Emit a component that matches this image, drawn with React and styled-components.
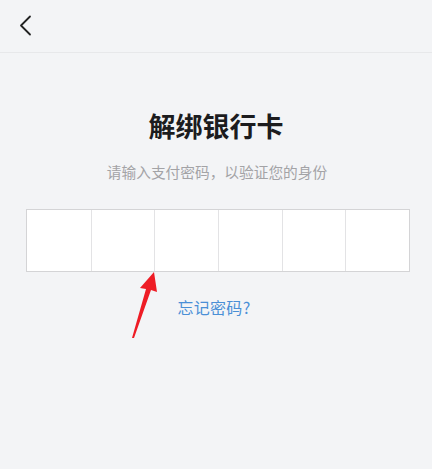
import React from "react";
import styled, { createGlobalStyle } from "styled-components";

const Global = createGlobalStyle`
  html, body { margin: 0; padding: 0; background: #f3f4f6; }
  body { font-family: "Noto Sans CJK SC", "Noto Sans", sans-serif; }
`;

const Page = styled.div`
  position: relative;
  width: 432px;
  height: 469px;
  background: #f3f4f6;
  display: flex;
  flex-direction: column;
  align-items: center;
  overflow: hidden;
`;

const Header = styled.div`
  align-self: stretch;
  height: 52px;
  border-bottom: 1px solid #e7e8ea;
  display: flex;
  align-items: center;
  padding-left: 14px;
`;

const BackButton = styled.button`
  border: none;
  background: none;
  padding: 0;
  width: 24px;
  height: 24px;
  display: flex;
  align-items: center;
  justify-content: center;
  cursor: pointer;
`;

const Title = styled.h1`
  margin: 57px 0 0;
  font-size: 27px;
  line-height: 32px;
  font-weight: 700;
  color: #1c1c1e;
  letter-spacing: 0;
`;

const Subtitle = styled.p`
  margin: 20px 0 0 2px;
  font-size: 14.7px;
  line-height: 20px;
  color: #a3a3a6;
`;

const CodeBox = styled.div`
  margin: 27px 0 0 4px;
  width: 384px;
  height: 63px;
  box-sizing: border-box;
  border: 1px solid #d4d4d6;
  background: #fff;
  display: grid;
  grid-template-columns: repeat(6, 1fr);
`;

const Cell = styled.div`
  border-left: ${(p) => (p.$first ? "none" : "1px solid #e3e3e5")};
`;

const ForgotLink = styled.a`
  margin: 25px 0 0 -4px;
  font-size: 16px;
  line-height: 20px;
  color: #4a8fd6;
  text-decoration: none;
  letter-spacing: 0.3px;
`;

const Annotation = styled.svg`
  position: absolute;
  left: 0;
  top: 0;
  pointer-events: none;
`;

export default function App() {
  return (
    <>
      <Global />
      <Page>
        <Header>
          <BackButton aria-label="back">
            <svg width="14" height="22" viewBox="0 0 14 22">
              <path d="M11 1.5 L2 10.5 L11 19.5" fill="none" stroke="#222" strokeWidth="1.8" strokeLinecap="round" strokeLinejoin="round" />
            </svg>
          </BackButton>
        </Header>
        <Title>解绑银行卡</Title>
        <Subtitle>请输入支付密码，以验证您的身份</Subtitle>
        <CodeBox>
          {[0, 1, 2, 3, 4, 5].map((i) => (
            <Cell key={i} $first={i === 0} />
          ))}
        </CodeBox>
        <ForgotLink href="#">忘记密码?</ForgotLink>
        <Annotation width="432" height="469" viewBox="0 0 432 469">
          <polygon
            points="154,272 157,292 151,290 134,338 132,338 146,289 140,288"
            fill="#ee1c25"
          />
        </Annotation>
      </Page>
    </>
  );
}
